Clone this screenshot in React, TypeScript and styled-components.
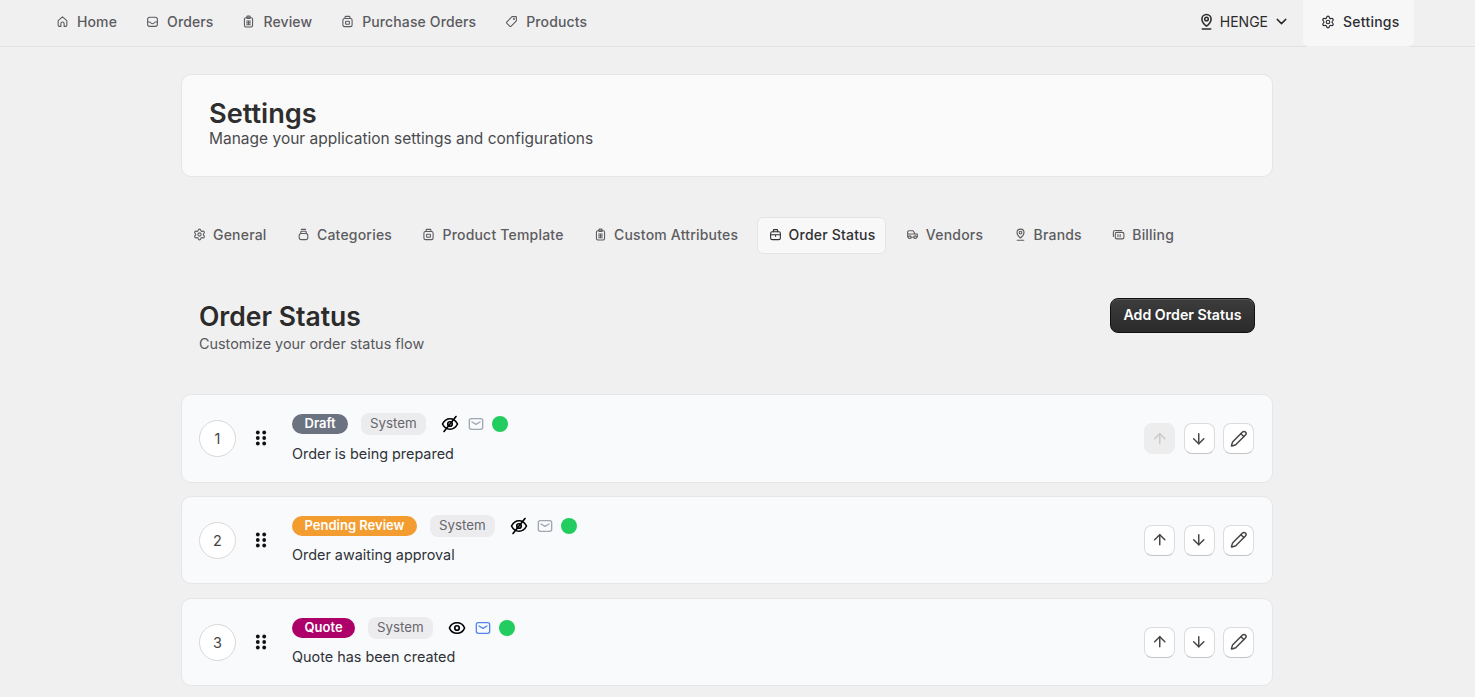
import React from "react";
import styled, { createGlobalStyle } from "styled-components";
import { ChevronDown, Settings, ArrowUp, ArrowDown, Pencil, Eye } from "lucide-react";

const Global = createGlobalStyle`
  html, body { margin: 0; padding: 0; background: #f0f0f0; height: 100%; overflow: hidden; }
  body { font-family: Inter, "Noto Sans", sans-serif; color: #2b2b2b; }
  * { box-sizing: border-box; }
`;

const Glyph = styled.svg.attrs({ viewBox: "0 0 24 24", fill: "none", stroke: "currentColor", strokeLinecap: "round", strokeLinejoin: "round" })``;

const HomeIcon = () => (
  <Glyph><path d="M4 10.500 12 3.500l8 7V19a2 2 0 0 1-2 2h-3v-5a3 3 0 0 0-6 0v5H6a2 2 0 0 1-2-2z" /></Glyph>
);
const InboxIcon = () => (
  <Glyph><rect x="3" y="4" width="18" height="17" rx="4" /><path d="M3 13h4c1 0 1.500 3 5 3s4-3 5-3h4" /></Glyph>
);
const ClipboardIcon = () => (
  <Glyph>
    <rect x="4.500" y="5" width="15" height="17" rx="2.500" />
    <rect x="9" y="2" width="6" height="4.500" rx="1" />
    <path d="M8.500 11h7M8.500 14.500h7M8.500 18h7M12 11v7" />
  </Glyph>
);
const BoxIcon = () => (
  <Glyph>
    <rect x="3.500" y="6.500" width="17" height="15" rx="3" />
    <path d="M7.500 6.500V4A1.500 1.500 0 0 1 9 2.500h6A1.500 1.500 0 0 1 16.500 4v2.500" />
    <rect x="8.500" y="11.500" width="7" height="5.500" rx="1" />
  </Glyph>
);
const TagIcon = () => (
  <Glyph>
    <path d="M13 3h7a1 1 0 0 1 1 1v7l-9.500 9.500a2 2 0 0 1-2.800 0l-5.200-5.200a2 2 0 0 1 0-2.800z" />
    <circle cx="16.500" cy="7.500" r="0.800" />
  </Glyph>
);
const PinIcon = () => (
  <Glyph>
    <path d="M12 18.500s-6.500-4.500-6.500-10a6.500 6.500 0 0 1 13 0c0 5.500-6.500 10-6.500 10z" />
    <circle cx="12" cy="8.500" r="2.500" />
    <path d="M6 22.500h12" />
  </Glyph>
);
const JarIcon = () => (
  <Glyph>
    <rect x="4" y="10" width="16" height="11.500" rx="4" />
    <path d="M7 10V7.500A1.500 1.500 0 0 1 8.500 6h7A1.500 1.500 0 0 1 17 7.500V10M8 2.500h8" />
  </Glyph>
);
const BriefcaseIcon = () => (
  <Glyph>
    <rect x="3" y="7" width="18" height="14.500" rx="3" />
    <path d="M8 7V4.500A1.500 1.500 0 0 1 9.500 3h5A1.500 1.500 0 0 1 16 4.500V7M3 12.500h18M12 12.500v2.500" />
  </Glyph>
);
const VanIcon = () => (
  <Glyph>
    <path d="M3 11V7.500A2.500 2.500 0 0 1 5.500 5H13l4 6h2a2 2 0 0 1 2 2v3.500h-1.500M3 11h18M3 11v5.500h1.500M9.500 17h5" />
    <circle cx="7" cy="17" r="2.500" />
    <circle cx="17" cy="17" r="2.500" />
  </Glyph>
);
const CardsIcon = () => (
  <Glyph>
    <rect x="6" y="8" width="16" height="12" rx="3" />
    <path d="M2.500 15.500V8A3.500 3.500 0 0 1 6 4.500h12M11 12v4M15 12v4" />
  </Glyph>
);
const EyeSlashIcon = () => (
  <Glyph>
    <path d="M2 12s3.500-7 10-7 10 7 10 7-3.500 7-10 7-10-7-10-7z" />
    <circle cx="12" cy="12" r="3" />
    <path d="M4 22 20 2" />
  </Glyph>
);
const MailGlyph = () => (
  <Glyph>
    <rect x="2" y="4" width="20" height="16" rx="3" />
    <path d="m6 9 6 3.500L18 9" />
  </Glyph>
);

const Page = styled.div`
  height: 697px;
  overflow: hidden;
`;
const TopBar = styled.header`
  height: 47px;
  border-bottom: 1px solid #e2e2e2;
  display: flex;
  align-items: stretch;
  justify-content: space-between;
  padding: 0 61px 0 56px;
`;
const NavList = styled.nav`
  display: flex;
  align-items: center;
  gap: 29px;
  padding-bottom: 3px;
`;
const NavLink = styled.a`
  display: flex;
  align-items: center;
  gap: 8px;
  font-size: 14px;
  font-weight: 500;
  color: #5b5b60;
  letter-spacing: 0.12px;
  svg { width: 13px; height: 13px; stroke-width: 2; }
`;
const TopRight = styled.div`
  display: flex;
  align-items: stretch;
  gap: 13px;
`;
const Location = styled.div`
  display: flex;
  align-items: center;
  font-size: 14px;
  color: #2b2b2b;
  gap: 5px;
  margin-top: -4px;
  svg { stroke-width: 2; }
`;
const PinSlot = styled.span`
  display: flex;
  svg { width: 17px; height: 17px; stroke-width: 2.200; }
`;
const SettingsTab = styled.a`
  width: 111px;
  padding: 0 0 3px 18px;
  display: flex;
  align-items: center;
  gap: 8px;
  font-size: 14px;
  font-weight: 500;
  letter-spacing: 0.25px;
  color: #2f2f33;
  background: #f7f7f7;
  border-radius: 0 0 6px 6px;
  margin-bottom: -1px;
  border-bottom: 1px solid #efefef;
  svg { width: 14px; height: 14px; }
`;
const Main = styled.main`
  width: 1092px;
  margin: 27px auto 0 181px;
`;
const HeaderCard = styled.section`
  height: 103px;
  background: #fafafa;
  border: 1px solid #e5e5e5;
  border-radius: 10px;
  padding: 24px 27px;
`;
const PageTitle = styled.h1`
  margin: 0;
  font-size: 27.200px;
  line-height: 30px;
  font-weight: 600;
  color: #2e2e2e;
`;
const PageSub = styled.p`
  margin: 0;
  font-size: 15.500px;
  line-height: 20px;
  color: #4a4a4e;
`;
const Tabs = styled.div`
  display: flex;
  align-items: center;
  margin-top: 40px;
  height: 37px;
  gap: 7.400px;
`;
const TabItem = styled.a<{ $active?: boolean }>`
  display: flex;
  align-items: center;
  height: 37px;
  gap: 7px;
  padding: 0 10px 3px 11px;
  border-radius: 6px;
  font-size: 14px;
  font-weight: 500;
  letter-spacing: 0.2px;
  color: ${(p) => (p.$active ? "#2f2f33" : "#5c5c61")};
  background: ${(p) => (p.$active ? "#f8f8f8" : "transparent")};
  border: 1px solid ${(p) => (p.$active ? "#e4e4e4" : "transparent")};
  svg { width: 13px; height: 13px; stroke-width: 2; }
`;
const SectionHead = styled.div`
  display: flex;
  justify-content: space-between;
  align-items: flex-start;
  padding: 44px 18px 0;
  height: 140.300px;
`;
const SectionTitle = styled.h2`
  margin: 0;
  font-size: 26.500px;
  line-height: 36px;
  font-weight: 600;
  color: #2b2b2b;
`;
const SectionSub = styled.p`
  margin: 0;
  font-size: 14.400px;
  line-height: 20px;
  color: #57575c;
`;
const AddButton = styled.button`
  height: 35px;
  width: 145px;
  padding: 0 0 3px;
  font: 600 14.200px Inter, sans-serif;
  color: #fff;
  border-radius: 8px;
  border: 1px solid #111;
  background: linear-gradient(#3d3d3d, #2a2a2a);
  box-shadow: inset 0 1px 0 rgba(255, 255, 255, 0.15);
`;
const List = styled.div`
  display: flex;
  flex-direction: column;
  gap: 13.500px;
`;
const Card = styled.article`
  height: 88.300px;
  background: #f9fafc;
  border: 1px solid #e6e6e8;
  border-radius: 10px;
  display: flex;
  align-items: center;
  padding: 0 18px 0 17px;
`;
const Index = styled.div`
  width: 37px;
  height: 37px;
  border-radius: 50%;
  border: 1px solid #d8d8da;
  background: #fff;
  display: flex;
  align-items: center;
  justify-content: center;
  font-size: 14.400px;
  color: #444;
`;
const Grip = styled.div`
  width: 18px;
  margin: 0 22px 0 16px;
  display: flex;
  justify-content: center;
  svg { width: 18px; height: 18px; }
  circle { fill: #111; }
`;
const Body = styled.div`
  flex: 1;
  display: flex;
  flex-direction: column;
  gap: 8.500px;
`;
const Meta = styled.div`
  display: flex;
  align-items: center;
  height: 22px;
`;
const Pill = styled.span<{ $color: string }>`
  background: ${(p) => p.$color};
  color: #fff;
  font-size: 13px;
  font-weight: 600;
  line-height: 19px;
  height: 20px;
  padding: 0 12.500px;
  border-radius: 10px;
`;
const SystemTag = styled.span`
  margin-left: 12.500px;
  background: #ececee;
  color: #66666c;
  font-size: 13.300px;
  line-height: 21px;
  height: 22px;
  padding: 0 9.500px;
  border-radius: 8px;
`;
const StatusIcons = styled.div`
  display: flex;
  align-items: center;
  margin-left: 15px;
  gap: 9px;
`;
const Visibility = styled.span`
  display: flex;
  svg { width: 18px; height: 18px; color: #000; stroke-width: 2.200; }
`;
const MailIcon = styled.span<{ $on?: boolean }>`
  display: flex;
  svg { width: 16px; height: 16px; stroke-width: 2; color: ${(p) => (p.$on ? "#4f86f0" : "#a0a6b2")}; }
`;
const Dot = styled.span`
  width: 16px;
  height: 16px;
  border-radius: 50%;
  margin-left: -1px;
  background: #22cc5e;
`;
const Desc = styled.p`
  margin: 0;
  font-size: 14.400px;
  line-height: 20px;
  color: #2f3238;
`;
const Actions = styled.div`
  display: flex;
  gap: 8.500px;
`;
const IconBtn = styled.button<{ $disabled?: boolean }>`
  width: 31px;
  height: 31px;
  padding: 0;
  display: flex;
  align-items: center;
  justify-content: center;
  border-radius: 8px;
  border: 1px solid ${(p) => (p.$disabled ? "#ededee" : "#dcdcde")};
  border-bottom-color: ${(p) => (p.$disabled ? "#ededee" : "#c4c4c6")};
  background: ${(p) => (p.$disabled ? "#ededee" : "#fff")};
  color: ${(p) => (p.$disabled ? "#c9c9cb" : "#444")};
  svg { width: 17.500px; height: 17.500px; }
`;

const GripDots = () => (
  <svg viewBox="0 0 18 18">
    {[3.5, 9, 14.5].flatMap((y) => [5.8, 12.2].map((x) => <circle key={`${x}-${y}`} cx={x} cy={y} r={1.9} />))}
  </svg>
);

const nav: [string, React.ReactNode][] = [
  ["Home", <HomeIcon key="h" />],
  ["Orders", <InboxIcon key="o" />],
  ["Review", <ClipboardIcon key="r" />],
  ["Purchase Orders", <BoxIcon key="p" />],
  ["Products", <TagIcon key="t" />],
];
const tabs: [string, React.ReactNode][] = [
  ["General", <Settings key="1" />],
  ["Categories", <JarIcon key="2" />],
  ["Product Template", <BoxIcon key="3" />],
  ["Custom Attributes", <ClipboardIcon key="4" />],
  ["Order Status", <BriefcaseIcon key="5" />],
  ["Vendors", <VanIcon key="6" />],
  ["Brands", <PinIcon key="7" />],
  ["Billing", <CardsIcon key="8" />],
];
const rows = [
  { n: 1, name: "Draft", color: "#6b7280", desc: "Order is being prepared", visible: false, first: true },
  { n: 2, name: "Pending Review", color: "#f39c2f", desc: "Order awaiting approval", visible: false, first: false },
  { n: 3, name: "Quote", color: "#ad0068", desc: "Quote has been created", visible: true, first: false },
];

export default function App() {
  return (
    <Page>
      <Global />
      <TopBar>
        <NavList>
          {nav.map(([label, icon]) => (
            <NavLink key={label}>{icon}{label}</NavLink>
          ))}
        </NavList>
        <TopRight>
          <Location>
            <PinSlot><PinIcon /></PinSlot>
            HENGE
            <ChevronDown size={17} />
          </Location>
          <SettingsTab><Settings />Settings</SettingsTab>
        </TopRight>
      </TopBar>
      <Main>
        <HeaderCard>
          <PageTitle>Settings</PageTitle>
          <PageSub>Manage your application settings and configurations</PageSub>
        </HeaderCard>
        <Tabs>
          {tabs.map(([label, icon]) => (
            <TabItem key={label} $active={label === "Order Status"}>{icon}{label}</TabItem>
          ))}
        </Tabs>
        <SectionHead>
          <div>
            <SectionTitle>Order Status</SectionTitle>
            <SectionSub>Customize your order status flow</SectionSub>
          </div>
          <AddButton>Add Order Status</AddButton>
        </SectionHead>
        <List>
          {rows.map((r) => (
            <Card key={r.n}>
              <Index>{r.n}</Index>
              <Grip><GripDots /></Grip>
              <Body>
                <Meta>
                  <Pill $color={r.color}>{r.name}</Pill>
                  <SystemTag>System</SystemTag>
                  <StatusIcons>
                    <Visibility>{r.visible ? <Eye /> : <EyeSlashIcon />}</Visibility>
                    <MailIcon $on={r.visible}><MailGlyph /></MailIcon>
                    <Dot />
                  </StatusIcons>
                </Meta>
                <Desc>{r.desc}</Desc>
              </Body>
              <Actions>
                <IconBtn $disabled={r.first}><ArrowUp /></IconBtn>
                <IconBtn><ArrowDown /></IconBtn>
                <IconBtn><Pencil /></IconBtn>
              </Actions>
            </Card>
          ))}
        </List>
      </Main>
    </Page>
  );
}
